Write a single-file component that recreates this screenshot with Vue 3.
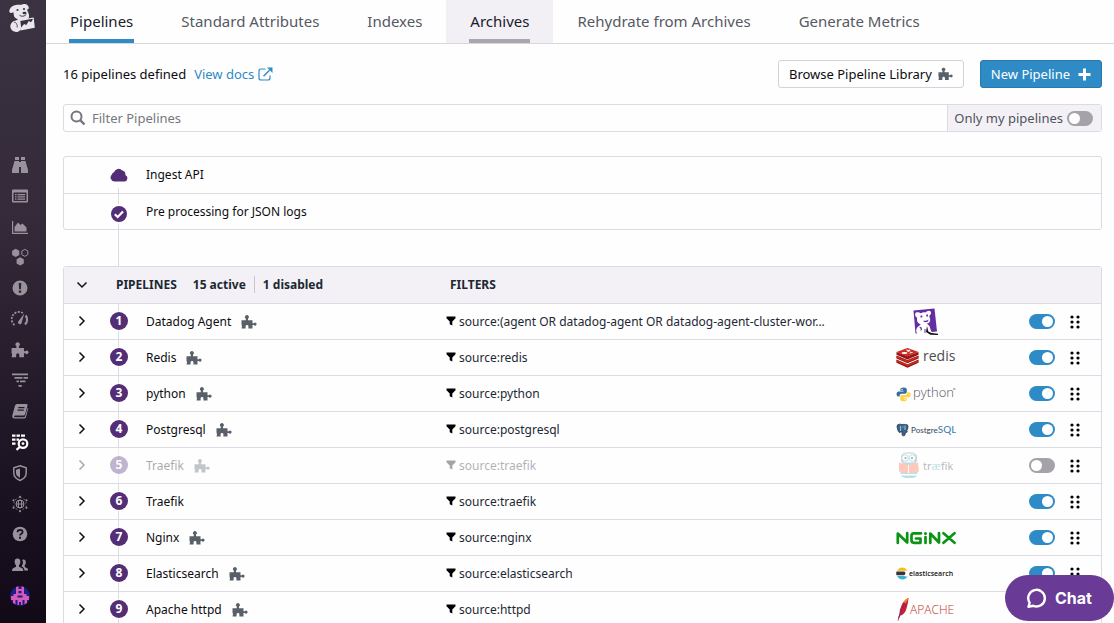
<script setup>
import { ref } from 'vue'

const tabs = [
  { label: 'Pipelines', state: 'active' },
  { label: 'Standard Attributes', state: '' },
  { label: 'Indexes', state: '' },
  { label: 'Archives', state: 'hovered' },
  { label: 'Rehydrate from Archives', state: '' },
  { label: 'Generate Metrics', state: '' },
]

const pipelines = ref([
  { name: 'Datadog Agent', library: true, filter: 'source:(agent OR datadog-agent OR datadog-agent-cluster-wor...', logo: 'datadog', enabled: true },
  { name: 'Redis', library: true, filter: 'source:redis', logo: 'redis', enabled: true },
  { name: 'python', library: true, filter: 'source:python', logo: 'python', enabled: true },
  { name: 'Postgresql', library: true, filter: 'source:postgresql', logo: 'postgresql', enabled: true },
  { name: 'Traefik', library: true, filter: 'source:traefik', logo: 'traefik', enabled: false },
  { name: 'Traefik', library: false, filter: 'source:traefik', logo: '', enabled: true },
  { name: 'Nginx', library: true, filter: 'source:nginx', logo: 'nginx', enabled: true },
  { name: 'Elasticsearch', library: true, filter: 'source:elasticsearch', logo: 'elasticsearch', enabled: true },
  { name: 'Apache httpd', library: true, filter: 'source:httpd', logo: 'apache', enabled: true },
])

const onlyMine = ref(false)
const query = ref('')
</script>

<template>
  <div class="shell">
    <svg class="defs" aria-hidden="true">
      <symbol id="puzzle" viewBox="0 0 16 14">
        <path d="M.5 5.200h4.300V3.600A1.900 1.900 0 1 1 7 3.600V5.200h4.500v3h1.300a1.500 1.500 0 1 1 0 1.700h-1.300V13.500H7.400v-2.200a1.400 1.400 0 0 0-2.800 0v2.200H.5l.5-2.300-.5-1.700z" />
      </symbol>
    </svg>

    <aside class="sidebar">
      <a class="brand" href="#" aria-label="Home">
        <svg width="28" height="32" viewBox="0 0 28 32">
          <path fill="#e9e7eb" d="M5 5.500C3.300 6.700 2 9 2.300 10.500c.4 1.800 2.700 1.900 4 .6l.7 3.900c.6 1.700 2.300 2.800 3.900 3.200-1.100 1-2.200 1.300-3.900 1.900-2.700 1.200-4.200 4.200-3.400 7 .7 2.500 3.400 4.300 6.500 3.800 2.200-.3 3.300-1.800 3.500-3.400l-.7-8.200 8-1.500c1.300-.8 1.600-3.800.5-5.900-.4-1-1.300-2.300-1.300-3.400 1.400.1 1.900-1.100 1.500-2.700C21 3.800 18.800 2.600 16.900 3c-1.600.3-2 .7-3.100.8-1.800.1-2.800-.4-4.900.3C7.400 4.500 6 4.800 5 5.500z" />
          <path fill="#e9e7eb" fill-rule="evenodd" d="M12 18.700l14.700-2.300 1.100 10.300-14.400 2.800zM13.300 20l.8 6.500 3-3.500 2.200 1 2.500-4 2.200 1.300 1.700-2.600-.1-1z" />
          <circle cx="10.500" cy="9" r="1.100" fill="#3a3240" />
          <circle cx="17" cy="8" r="1.100" fill="#3a3240" />
          <path d="M12.500 14.200c2.200 1.700 5 1.200 6.800-.9" fill="none" stroke="#3a3240" />
          <ellipse cx="17.500" cy="12" rx="2" ry="1.300" fill="#3a3240" />
          <path d="M7 21c2.500.5 3.500 2.500 3.200 5.500" fill="none" stroke="#3a3240" stroke-width=".8" />
        </svg>
      </a>
      <nav class="rail" aria-label="Main">
        <a href="#" aria-label="Events"><svg viewBox="0 0 18 18"><path d="M4 1h4v3H4zM10 1h4v3h-4zM3.500 5H8v12H1v-3zM10 5h4.500l2.500 9v3h-7zM8 6h2v5H8z" /></svg></a>
        <a href="#" aria-label="Dashboards"><svg viewBox="0 0 18 18"><path fill-rule="evenodd" d="M2 2.500h14q1 0 1 1v11q0 1-1 1H2q-1 0-1-1v-11q0-1 1-1zM2.500 5.500v8.500h13V5.500zM4 7h1.500v1.300H4zM6.500 7H14v1.300H6.500zM4 9.200h1.500v1.300H4zM6.500 9.200H14v1.300H6.500zM4 11.400h1.500v1.300H4zM6.500 11.400H14v1.300H6.500z" /></svg></a>
        <a href="#" aria-label="Metrics"><svg viewBox="0 0 18 18"><path d="M1 3h1.200v11.800H17V16H1zM3.500 13.500V9L7 4.500 9.500 7 11.500 5.500l4 4v4z" /></svg></a>
        <a href="#" aria-label="Infrastructure"><svg viewBox="0 0 18 18"><path d="M4.700.8l3.600 2v4.200l-3.600 2-3.600-2V2.800zM9.200 9.300l3.600 2v4.200l-3.600 2-3.600-2v-4.200z" /><path d="M13.800 1.300l3 1.700v3.600l-3 1.700-3-1.700V3z" fill="none" stroke="currentColor" /></svg></a>
        <a href="#" aria-label="Monitors"><svg viewBox="0 0 18 18"><path fill-rule="evenodd" d="M9 1.500a7.500 7.500 0 1 0 0 15 7.500 7.500 0 0 0 0-15zM7.700 4h2.600L9.900 10.200H8.100zM7.800 11.500h2.400v2.300H7.800z" /></svg></a>
        <a href="#" aria-label="Performance"><svg viewBox="0 0 18 18"><path d="M3.500 15A7.300 7.300 0 0 1 12.500 3.500" fill="none" stroke="currentColor" stroke-width="1.800" stroke-dasharray="2 1.300" /><path d="M14.700 5.500a7 7 0 0 1-.7 9" fill="none" stroke="currentColor" stroke-width="2.300" /><path d="M13.300 3.500L10.800 12a1.900 1.900 0 1 1-3-1.200z" /></svg></a>
        <a href="#" aria-label="Integrations"><svg viewBox="0 0 16 14"><use href="#puzzle" /></svg></a>
        <a href="#" aria-label="Processes"><svg viewBox="0 0 18 18"><path d="M1 2.500h16v1.700H1zM3.500 6h8v1.700h-8zM12.500 6H17v1.700h-4.500zM5.500 9.500h2.500v1.700H5.500zM9 9.500h5.500v1.700H9zM7.500 14h3.300v1.700H7.500z" /></svg></a>
        <a href="#" aria-label="Notebooks"><svg viewBox="0 0 18 18"><path fill-rule="evenodd" d="M6 2h9.500q1.500.3 1 1.800L14 12.500q-.5 1-1.500 1H4q-1 .2-.8 1.200.2.500.8.500h9q.7 0 1-.7L16.700 6h.6L15 15q-.5 1.500-2 1.500H3.500Q1 16.300 1.300 13.500L4 3.700Q4.500 2 6 2zM7.300 5v1.200h6.200V5zM6.600 7.600v1.200h6.200V7.600z" /></svg></a>
        <a class="current" href="#" aria-label="Logs" aria-current="page"><svg viewBox="0 0 18 18"><path d="M1 1.500h3.500v2.300H1zM5.500 1.500H9v2.300H5.500zM10 1.500h4v2.300h-4zM1 5.500h3.500v2.300H1zM5.500 5.500H8v2.300H5.500zM1 9.500h3.500v2.300H1z" /><path d="M12 6.300a4.300 4.300 0 1 1 0 8.600A4.300 4.300 0 0 1 12 6.300zM9 13.700l-3.500 3.200" fill="none" stroke="currentColor" stroke-width="2.200" /><circle cx="12" cy="10.600" r="1.400" /></svg></a>
        <a href="#" aria-label="Security"><svg viewBox="0 0 18 18"><path d="M9 1.800l6.200 2V9c0 3.500-2.700 6-6.200 7.500C5.500 15 2.800 12.500 2.800 9V3.800z" fill="none" stroke="currentColor" stroke-width="1.500" /><path d="M9 4.500v9.300C6.500 12.500 5 11 5 9V5.700z" /></svg></a>
        <a href="#" aria-label="Synthetics"><svg viewBox="0 0 18 18"><g fill="none" stroke="currentColor"><circle cx="9" cy="9" r="4" /><ellipse cx="9" cy="9" rx="1.800" ry="4" /><path d="M5 9h8" /><path d="M9 2l6 3.500v7L9 16l-6-3.500v-7z" stroke-width=".7" stroke-dasharray="2 2" /></g><circle cx="9" cy="1.800" r="1" /><circle cx="9" cy="16.200" r="1" /><circle cx="2.500" cy="5.300" r="1" /><circle cx="15.500" cy="5.300" r="1" /><circle cx="2.500" cy="12.700" r="1" /><circle cx="15.500" cy="12.700" r="1" /></svg></a>
        <a href="#" aria-label="Help"><svg viewBox="0 0 18 18"><circle cx="9" cy="9" r="7.300" /><path d="M6.500 7.200q0-2.400 2.600-2.400 2.500.1 2.500 2.100 0 1.300-1.300 1.900-1.200.5-1.200 1.700" fill="none" stroke="#1c1222" stroke-width="1.800" /><path d="M8 11.800h2v2H8z" fill="#1c1222" /></svg></a>
        <a href="#" aria-label="Team"><svg viewBox="0 0 18 18"><path d="M6.500 2.500c2.200 0 3 1.700 2.800 3.700-.1 1.400-.7 2.200-1.300 3v1.500l3.300 1.500q1 .6 1 2.800H1q0-2.200 1-2.800l3-1.500V9.200C4.300 8.400 3.800 7.600 3.700 6.200c-.2-2 .6-3.700 2.800-3.700z" /><path d="M12.300 3.500c2 0 2.700 1.500 2.500 3.300-.1 1.200-.6 2-1.100 2.600V11l2.500 1.200q.9.600.9 2.300h-3.700q0-2.300-1.400-3.200l-1.400-.7q1.400-2 1.400-4.300 0-1.300-.9-2.300.5-.5 1.200-.5z" /></svg></a>
        <a href="#" aria-label="Account"><svg class="avatar" viewBox="0 0 20 20"><circle cx="10" cy="10" r="10" fill="#1c1d86" /><path fill="#d45cb6" d="M6 1l2.500-.8V3h3V.2L14 1v7h2.500v2H19v4h-2v3l-2.500 1.500V14h-2v5h-1.500v-3h-2v3H7.500v-5h-2v4.500L3 17v-3H1v-4h2.500V8H6z" /><path fill="#1c1d86" d="M8.500 5h3v2.300h-3zM7.500 9.500h5v2h-5z" /></svg></a>
      </nav>
    </aside>

    <main class="main">
      <nav class="tabs" aria-label="Log configuration">
        <a v-for="tab in tabs" :key="tab.label" href="#" class="tab" :class="tab.state"><span>{{ tab.label }}</span></a>
      </nav>

      <div class="content">
        <div class="toolbar">
          <p class="count">16 pipelines defined</p>
          <a class="docs" href="#">View docs
            <svg width="15" height="14" viewBox="0 0 15 14"><path d="M7.500 2H3Q1 2 1 4v7q0 2 2 2h7q2 0 2-2V8.500" fill="none" stroke="currentColor" stroke-width="1.200" /><path d="M5.500 9.200l6-6" stroke="currentColor" stroke-width="1.500" /><path d="M9 .5h5.500V6z" fill="currentColor" /></svg>
          </a>
          <button type="button" class="btn plain">Browse Pipeline Library <svg width="15" height="14" viewBox="0 0 16 14"><use href="#puzzle" /></svg></button>
          <button type="button" class="btn primary">New Pipeline <svg width="13" height="13" viewBox="0 0 13 13"><path d="M5 .5h3V5h4.500v3H8v4.500H5V8H.5V5H5z" fill="#fff" /></svg></button>
        </div>

        <div class="search">
          <label class="field">
            <svg width="16" height="16" viewBox="0 0 16 16"><circle cx="6.500" cy="6.500" r="5" fill="none" stroke="#77747e" stroke-width="2" /><path d="M10.200 10.200l4.300 4.300" stroke="#77747e" stroke-width="2.400" /></svg>
            <input v-model="query" type="text" placeholder="Filter Pipelines" aria-label="Filter Pipelines">
          </label>
          <label class="mine">Only my pipelines <input v-model="onlyMine" class="toggle" type="checkbox"></label>
        </div>

        <ul class="stages">
          <li class="ingest">
            <svg width="18" height="14" viewBox="0 0 18 14"><path d="M4.300 13.500A3.900 3.900 0 0 1 2 6.600 2.700 2.700 0 0 1 4 4.300 4.800 4.800 0 0 1 12.300 2.500 4 4 0 0 1 15.300 7 3.400 3.400 0 0 1 14.600 13.500z" /></svg>
            <span>Ingest API</span>
          </li>
          <li class="pre">
            <svg width="18" height="18" viewBox="0 0 18 18"><circle cx="9" cy="9" r="8" /><path d="M4.800 9.200l2.900 2.800 5.300-5.500" fill="none" stroke="#fff" stroke-width="2.200" /></svg>
            <span>Pre processing for JSON logs</span>
          </li>
        </ul>
        <div class="connector"></div>

        <table class="pipelines">
          <colgroup>
            <col class="c-open"><col class="c-order"><col class="c-name"><col><col class="c-logo"><col class="c-toggle"><col class="c-grip">
          </colgroup>
          <thead>
            <tr>
              <th><button type="button" class="chev" aria-label="Collapse pipelines"><svg width="12" height="8" viewBox="0 0 12 8"><path d="M1.500 1.500L6 6l4.500-4.500" /></svg></button></th>
              <th colspan="2" class="summary"><span>PIPELINES</span><span class="stat">15 active</span><span class="stat last">1 disabled</span></th>
              <th class="fhead">FILTERS</th>
              <th colspan="3"></th>
            </tr>
          </thead>
          <tbody>
            <tr v-for="(p, i) in pipelines" :key="i" :class="{ off: !p.enabled }">
              <td class="open"><button type="button" class="chev" :aria-label="'Expand ' + p.name"><svg width="8" height="12" viewBox="0 0 8 12"><path d="M1.500 1.500L6 6l-4.500 4.500" /></svg></button></td>
              <td class="order"><span class="num">{{ i + 1 }}</span></td>
              <td class="name"><span>{{ p.name }}</span><svg v-if="p.library" width="16" height="14" viewBox="0 0 16 14"><use href="#puzzle" /></svg></td>
              <td class="filter"><svg width="10" height="10" viewBox="0 0 10 10"><path d="M.5.5h9v1.700L6.300 5.500v4L3.700 8.300V5.500L.5 2.200z" /></svg><span>{{ p.filter }}</span></td>
              <td class="logo">
                <svg v-if="p.logo === 'datadog'" width="60" height="30" viewBox="0 0 60 30">
                  <path fill="#642da4" d="M17.500 3.500L38.500 1.500 41 24.500 19.500 26.500z" />
                  <path fill="#fff" d="M20 5.500c2.200-.8 3.500-.2 4.500.8 2-.9 4-1.200 5.500-.8.600-1.500 3-2.600 4.700-1 .8 1.700 0 3.500-1.500 4.200l1 3.800c.3 2.300-1.300 3.800-3.400 4.100l2.700 2.400 1.400 4.500 2 3.500H21.500c-1.800-2-1.800-5 .1-7l3.200-2.500c-2.100-.8-3.600-2.200-3.800-4.200l.1-2.800c-2.100-.6-2.600-3.500-1.100-5z" />
                  <path fill="#642da4" d="M24.500 8.500h1.800v2h-1.800zM30.300 7.500h1.700v2h-1.700zM27.500 13.500q3 .8 5-1l-.5 2q-2.500 1.500-4.500 0zM23 20q3-1 3 2.500l-1.500 2q1-3-1.500-4.500zM28.500 22h1v4h-1z" />
                  <path fill="#111" d="M31 19l1.300 5.500 3.200 1.500 6.500.8v1.200l-7.500-.2-4.500-2.800z" />
                </svg>
                <svg v-else-if="p.logo === 'redis'" width="60" height="30" viewBox="0 0 60 30">
                  <path fill="#8f1714" d="M.5 16.500l11 4.700 11-4.700v3.200l-11 5L.5 19.700zM.5 12.500l11 4.500 11-4.500v3l-11 4.700L.5 15.500zM.5 9l11 4.300L22.500 9v2.700L11.500 16.500.5 11.700z" />
                  <path fill="#cc2a22" d="M.5 9L11.500 5l11 4-11 4.500zM.5 13l11 4.500 11-4.500v1.700l-11 4.600-11-4.600zM.5 17l11 4.500 11-4.500v1.700l-11 4.600-11-4.600z" />
                  <ellipse cx="8.500" cy="10" rx="3" ry="1" fill="#fff" /><path d="M10 6.500l2.800.6 1.400-.7-.5 1.200 1.800.5-2.500.3-.6.9-.9-1-1.500-.2 1-.7zM13 10.500l1.700-1.500 3 .7z" fill="#fff" />
                  <text x="27" y="18" font-size="14" fill="#4b4b51" font-family="Open Sans, sans-serif" font-weight="500">redis</text>
                </svg>
                <svg v-else-if="p.logo === 'python'" width="60" height="30" viewBox="0 0 60 30">
                  <path fill="#356f9f" d="M7.700 8.500q3.100 0 3.100 2V13q0 1.700-1.700 1.700H5.600q-1.900 0-1.900 1.800v1H2.300Q.5 17.500.5 15T2.500 12.400h5v-.6h-3.200v-1.300q0-2 3.400-2z" />
                  <path fill="#ffd343" d="M7.300 22.200q-3.100 0-3.100-2v-2.500q0-1.700 1.700-1.700h3.500q1.900 0 1.900-1.800v-1h1.600q1.800 0 1.800 2.500t-2 2.600H7.600v.6h3.200v1.300q0 2-3.500 2z" />
                  <circle cx="6" cy="10.400" r=".7" fill="#fff" /><circle cx="9" cy="20.400" r=".7" fill="#fff" />
                  <text x="17" y="18" font-size="13" fill="#55555a" font-family="Open Sans, sans-serif" font-weight="300">python</text>
                  <path d="M57 10h2.500" stroke="#777" />
                </svg>
                <svg v-else-if="p.logo === 'postgresql'" width="60" height="30" viewBox="0 0 60 30">
                  <path fill="#336791" stroke="#28343e" stroke-width=".8" d="M1 11.500q0-2.300 2.500-2.300 1.600-.1 2.600.5 2-.9 3.400 0 2.500-.7 2.500 1.800 0 2.500-1.500 4.700l1 .5q-1 1-2.200.9l-.3 2.400q-.5 1-1.600.8-1.200 0-1.300-1.300v-3q-.5 1-1.500.5-1 1-1.500.3Q1.500 15.500 1 11.500z" />
                  <path stroke="#fff" stroke-width=".6" fill="none" d="M4.600 11v5M9 10.500V15M6.500 12h1" />
                  <text x="15" y="18" font-size="8" fill="#44505c" font-family="Lato, sans-serif">Postgre<tspan font-size="10" fill="#4682b4">SQL</tspan></text>
                </svg>
                <svg v-else-if="p.logo === 'traefik'" width="60" height="30" viewBox="0 0 60 30">
                  <rect x="5" y="1.500" width="16" height="12" rx="5" fill="#6b7680" /><path fill="#fff" d="M7.500 2.500h11v9h-11z" />
                  <circle cx="9" cy="7" r="3.300" fill="#fff" stroke="#37abc8" /><circle cx="16.500" cy="7" r="3.300" fill="#fff" stroke="#37abc8" /><circle cx="9.500" cy="7" r="1" /><circle cx="16" cy="7" r="1" />
                  <rect x="4.500" y="12" width="17" height="15" rx="5" fill="#37abc8" /><path fill="#ff6a3c" d="M3 11.500l9.500 2.500 9.500-2.500 1 9-9.500 2-10.500-2z" /><path fill="#fff" d="M4.500 23h17v1.500h-17z" /><path d="M12.500 14v8" stroke="#fff" />
                  <text x="27" y="19" font-size="11" fill="#333" font-family="Open Sans, sans-serif" font-weight="500">tr<tspan fill="#37abc8">æ</tspan>fik</text>
                </svg>
                <svg v-else-if="p.logo === 'nginx'" width="60" height="30" viewBox="0 0 60 30">
                  <path fill="none" stroke="#0b9414" stroke-width="2.700" stroke-linejoin="round" stroke-linecap="round" d="M1.800 20V10.500L11.200 19.500V10M25 10.300H18q-2.500 0-2.500 2.500v4.500q0 2.500 2.500 2.500h6.500V15.500h-4.500M29.500 14v6M34.300 20V10.500L43 19.500V10M47.500 10.200l11 9.600M58.500 10.200l-11 9.600" />
                  <circle cx="29.500" cy="10.500" r="1.500" fill="#0b9414" />
                </svg>
                <svg v-else-if="p.logo === 'elasticsearch'" width="60" height="30" viewBox="0 0 60 30">
                  <path fill="#f4bd19" d="M1 11.700Q3 8.500 6.500 8.500q3 0 5 3.200z" /><path fill="#343741" d="M.5 12.500H8q1.400.1 1.400 1.800T8 16.200H.5q-.6-1.900 0-3.700z" /><path fill="#3caed2" d="M1.200 17H8.500l1.500.7 1.700-.7Q10 20.400 6.500 20.600 2.800 20.400 1.200 17z" />
                  <text x="13" y="17" font-size="7" fill="#111" font-family="Open Sans, sans-serif" font-weight="600">elasticsearch</text>
                </svg>
                <svg v-else-if="p.logo === 'apache'" width="60" height="30" viewBox="0 0 60 30">
                  <path fill="#c9202f" d="M12.500 3q-4.500 1.500-7 7.500-2.500 5-2 9l-2 6 .7.300 2-5q5-1.500 6.500-8 1.500-5 1.800-9.800z" /><path fill="#f18a2b" d="M12.500 3q-3 1-4.700 4l1.500 1.500q2-2.500 3.200-5.500z" /><path fill="none" stroke="#702b78" d="M9 8Q5 14 2.500 23" />
                  <text x="14" y="19" font-size="12" fill="#c0352c" font-family="Open Sans, sans-serif" font-weight="300">APACHE</text>
                </svg>
              </td>
              <td><input v-model="p.enabled" class="toggle" type="checkbox" :aria-label="'Enable ' + p.name"></td>
              <td><button type="button" class="grip" :aria-label="'Reorder ' + p.name"><svg width="10" height="14" viewBox="0 0 10 14"><circle v-for="d in 6" :key="d" :cx="d % 2 ? 2 : 8" :cy="2 + Math.floor((d - 1) / 2) * 5" r="1.600" /></svg></button></td>
            </tr>
          </tbody>
        </table>
      </div>
    </main>

    <button type="button" class="chat">
      <svg width="20" height="20" viewBox="0 0 20 20"><path d="M2.600 14.700A8.300 8.300 0 1 1 6.300 17.800L1.500 18.700z" fill="none" stroke="#fff" stroke-width="2.400" stroke-linejoin="round" /></svg>
      Chat
    </button>
  </div>
</template>

<style>
body {
  margin: 0;
  background: #fefefe;
}
</style>

<style scoped>
* {
  box-sizing: border-box;
}

.shell {
  display: flex;
  height: 100vh;
  overflow: hidden;
  font: 12px/18px "Noto Sans", sans-serif;
  font-weight: 450;
  color: #0c0c10;
}

button {
  margin: 0;
  padding: 0;
  border: 0;
  background: none;
  font: inherit;
  color: inherit;
  cursor: pointer;
}

a {
  color: inherit;
  text-decoration: none;
}

svg {
  display: block;
  flex: none;
}

.defs {
  position: absolute;
  width: 0;
  height: 0;
}

.sidebar {
  display: flex;
  flex: none;
  flex-direction: column;
  width: 46px;
  padding: 1px 0 12px;
  background: linear-gradient(#3b3341, #342a3a 35%, #1c1323 75%, #130a18);
}

.brand {
  height: 149px;
  padding-left: 7px;
}

.rail {
  display: flex;
  flex: 1;
  flex-direction: column;
  align-items: center;
  justify-content: space-between;
  width: 40px;
  color: #97929c;
}

.rail a {
  display: flex;
  align-items: center;
  height: 30px;
}

.rail svg {
  width: 18px;
  height: 18px;
  fill: currentColor;
}

.rail .current {
  color: #fff;
}

.rail .avatar {
  width: 20px;
  height: 20px;
}

.main {
  flex: 1;
  min-width: 0;
  overflow: hidden;
}

.tabs {
  display: flex;
  height: 44px;
  border-bottom: 1px solid #d9d6de;
  font-size: 15px;
  font-weight: 400;
  color: #555962;
}

.tab {
  padding: 0 23px;
}

.tab span {
  display: block;
  height: 43px;
  padding: 0 1px;
  border-bottom: 4px solid transparent;
  line-height: 42px;
}

.tab.active span {
  border-color: #2f8bc5;
  color: #17202a;
}

.tab.hovered {
  background: #f2f0f4;
  color: #17202a;
}

.tab.hovered span {
  border-color: #a9a6ad;
}

.content {
  padding: 16px 12px 0 17px;
}

.toolbar {
  display: flex;
  align-items: center;
  font-size: 13px;
}

.count {
  margin: 0 8px 0 0;
}

.docs {
  display: flex;
  gap: 4px;
  align-items: center;
  margin-right: auto;
  color: #2f8bc5;
}

.btn {
  display: flex;
  gap: 6px;
  align-items: center;
  height: 28px;
  padding: 0 10px;
  border: 1px solid #d4d1da;
  border-radius: 3px;
  white-space: nowrap;
}

.plain svg {
  fill: #59606a;
}

.primary {
  gap: 8px;
  margin-left: 16px;
  border-color: #2878ad;
  background: #2f8bc5;
  color: #fff;
}

.search {
  display: flex;
  height: 28px;
  margin-top: 16px;
  border: 1px solid #dcdae2;
  border-radius: 3px;
  font-size: 13px;
  font-weight: 400;
}

.field {
  display: flex;
  flex: 1;
  gap: 6px;
  align-items: center;
  padding-left: 6px;
}

.field input {
  flex: 1;
  min-width: 0;
  padding: 0;
  border: 0;
  outline: 0;
  background: none;
  font: inherit;
}

.field input::placeholder {
  color: #77777f;
}

.mine {
  display: flex;
  gap: 4px;
  align-items: center;
  padding: 0 8px 0 6px;
  border-left: 1px solid #dcdae2;
  background: #f3f1f5;
  color: #50545e;
}

.toggle {
  display: block;
  width: 26px;
  height: 15px;
  margin: 0;
  padding: 2px;
  border-radius: 8px;
  appearance: none;
  background: #a5a2a9;
  cursor: pointer;
}

.toggle::before {
  display: block;
  width: 11px;
  height: 11px;
  border-radius: 50%;
  background: #fff;
  content: "";
}

.toggle:checked {
  background: #2f8bc5;
}

.toggle:checked::before {
  margin-left: auto;
}

.stages {
  margin: 24px 0 0;
  padding: 0;
  border: 1px solid #dcdae2;
  border-radius: 3px;
  list-style: none;
}

.stages li {
  display: grid;
  grid-template-columns: 18px 1fr;
  column-gap: 18px;
  align-items: center;
  height: 35px;
  padding-left: 46px;
  background: linear-gradient(#dcdae2, #dcdae2) 54px 0 / 1px 100% no-repeat;
}

.stages svg {
  fill: #532e76;
}

.stages .ingest {
  height: 37px;
  border-bottom: 1px solid #dcdae2;
  background-position: 54px 31px;
}

.stages .pre svg {
  margin-top: 4px;
  border-radius: 50%;
  box-shadow: 0 0 0 1px #fefefe;
  background: #fefefe;
}

.connector {
  width: 1px;
  height: 36px;
  margin-left: 55px;
  background: #dcdae2;
}

.pipelines {
  width: 100%;
  border: 1px solid #dcdae2;
  border-radius: 3px;
  border-spacing: 0;
  table-layout: fixed;
}

.c-open {
  width: 37px;
}

.c-order {
  width: 36px;
}

.c-name {
  width: 309px;
}

.c-logo {
  width: 133px;
}

.c-toggle,
.c-grip {
  width: 36px;
}

th {
  height: 37px;
  padding: 0;
  border-bottom: 1px solid #dcdae2;
  background: #f3f1f5;
  color: #1c2833;
  font-weight: 700;
  text-align: left;
}

td {
  height: 36px;
  padding: 0;
  border-bottom: 1px solid #dcdae2;
}

.open,
.order {
  padding-bottom: 2px;
}

.chev {
  display: grid;
  place-items: center;
  width: 36px;
  height: 24px;
}

.chev path {
  fill: none;
  stroke: #111;
  stroke-width: 1.5;
}

.summary {
  padding-left: 15px;
}

.stat {
  margin-left: 16px;
}

.stat.last {
  margin-left: 8px;
  padding-left: 8px;
  border-left: 1px solid #c9c6cf;
}

.fhead {
  padding-left: 4px;
}

.order {
  background: linear-gradient(#dcdae2, #dcdae2) 17px 0 / 1px 100% no-repeat;
}

.num {
  display: block;
  width: 18px;
  height: 18px;
  margin: 0 auto;
  border-radius: 50%;
  background: #532e76;
  box-shadow: 0 0 0 1px #fefefe;
  color: #fff;
  font-size: 12px;
  font-weight: 700;
  text-align: center;
}

.name {
  padding-left: 9px;
}

.name span {
  display: inline-block;
  vertical-align: middle;
}

.name svg {
  display: inline-block;
  margin-left: 10px;
  vertical-align: middle;
  fill: #59606a;
}

.filter {
  color: #1c2833;
  white-space: nowrap;
}

.filter svg {
  display: inline-block;
  margin-right: 3px;
}

.off .chev,
.off .num,
.off .name > *,
.off .filter > *,
.off .logo svg {
  opacity: 0.35;
}

.off .order {
  background-image: linear-gradient(#efedf2, #efedf2);
}

.grip {
  display: grid;
  place-items: center;
  width: 20px;
  height: 24px;
}

.chat {
  position: fixed;
  right: 0;
  bottom: 2px;
  display: flex;
  gap: 8px;
  align-items: center;
  justify-content: center;
  width: 109px;
  height: 46px;
  border-radius: 23px;
  background: #693b96;
  color: #fff;
  font-size: 16px;
  font-weight: 700;
  font-family: Inter, sans-serif;
}
</style>
